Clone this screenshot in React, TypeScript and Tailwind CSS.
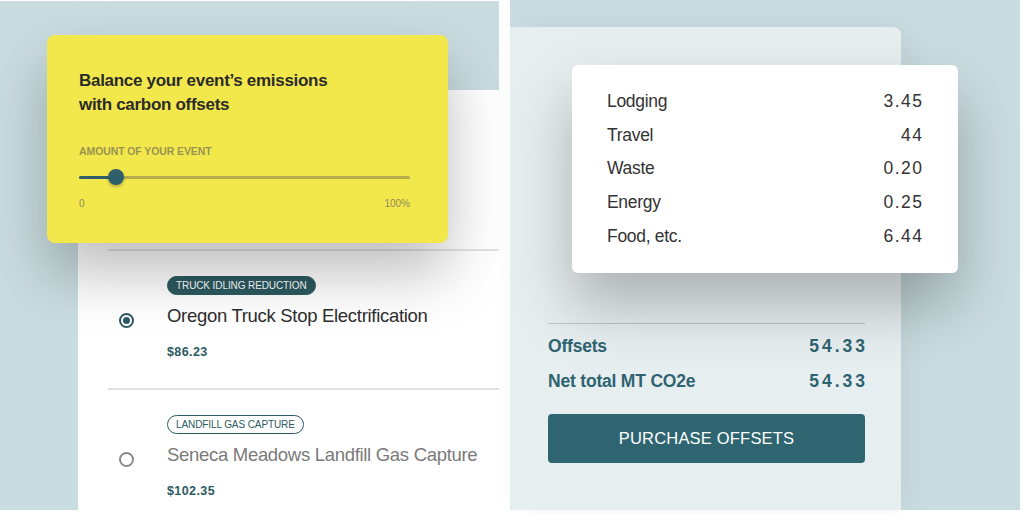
import React from "react";

const font = { fontFamily: '"Liberation Sans", Arial, sans-serif' };

function Radio({ checked }: { checked: boolean }) {
  return (
    <div
      className={`w-[15px] h-[15px] rounded-full border-2 flex items-center justify-center shrink-0 ${
        checked ? "border-[#2d5a63]" : "border-[#8a8a8a]"
      }`}
    >
      {checked && <div className="w-[7px] h-[7px] rounded-full bg-[#2d5a63]" />}
    </div>
  );
}

function Item({
  badge,
  title,
  price,
  selected,
}: {
  badge: string;
  title: string;
  price: string;
  selected: boolean;
}) {
  return (
    <div className="shrink-0 border-t-2 border-[#e2e2e2] h-[139px] flex pl-[11px] pt-[25px]">
      <div className="mt-[37px]">
        <Radio checked={selected} />
      </div>
      <div className="ml-[33px] flex flex-col items-start">
        <div
          className={`h-[19px] px-[8px] rounded-full flex items-center text-[10px] tracking-[-0.1px] ${
            selected
              ? "bg-[#2b5a60] text-white border border-[#2b5a60]"
              : "bg-white text-[#2b5a60] border border-[#2b5a60]"
          }`}
        >
          {badge}
        </div>
        <div
          className={`mt-[9px] text-[18.5px] leading-[24px] tracking-[-0.3px] ${
            selected ? "text-[#2e2e2e]" : "text-[#7a7a7a]"
          }`}
        >
          {title}
        </div>
        <div className="mt-[17px] text-[12.5px] leading-[14px] font-bold tracking-[0.4px] text-[#2b5a63]">
          {price}
        </div>
      </div>
    </div>
  );
}

export default function App() {
  const rows: [string, string][] = [
    ["Lodging", "3.45"],
    ["Travel", "44"],
    ["Waste", "0.20"],
    ["Energy", "0.25"],
    ["Food, etc.", "6.44"],
  ];
  return (
    <div className="w-[1024px] h-[513px] bg-white flex gap-[11px] overflow-hidden" style={font}>
      {/* Left panel */}
      <div className="relative mt-[1px] w-[499px] h-[509px] bg-[#c9dcdf] flex flex-col">
        <div className="ml-[78px] mt-[89px] flex-1 bg-white flex flex-col pl-[30px] pt-[159px] overflow-hidden">
          <Item
            badge="TRUCK IDLING REDUCTION"
            title="Oregon Truck Stop Electrification"
            price="$86.23"
            selected
          />
          <Item
            badge="LANDFILL GAS CAPTURE"
            title="Seneca Meadows Landfill Gas Capture"
            price="$102.35"
            selected={false}
          />
        </div>
        {/* Yellow card overlay */}
        <div className="absolute left-[47px] top-[34px] w-[401px] h-[208px] bg-[#f2e84c] rounded-[8px] shadow-[0_30px_60px_rgba(0,0,0,0.26)] pl-[32px] pr-[38px] pt-[34px]">
          <div className="text-[17px] leading-[24px] font-bold text-[#2b2b2b] tracking-[-0.3px]">
            Balance your event’s emissions
            <br />
            with carbon offsets
          </div>
          <div className="mt-[28px] text-[10.5px] leading-[12px] font-bold text-[#9a9450] tracking-[-0.1px]">
            AMOUNT OF YOUR EVENT
          </div>
          <div className="relative mt-[11px] h-[18px] flex items-center">
            <div className="w-full h-[3px] bg-[#b3ad4c] rounded-full" />
            <div className="absolute left-0 w-[37px] h-[3px] bg-[#2e5f6b] rounded-full" />
            <div className="absolute left-[29px] w-[16px] h-[16px] rounded-full bg-[#2e5f6b] shadow-[0_2px_3px_rgba(0,0,0,0.25)]" />
          </div>
          <div className="mt-[10px] flex justify-between text-[10px] text-[#8f8a55]">
            <span>0</span>
            <span>100%</span>
          </div>
        </div>
      </div>

      {/* Right panel */}
      <div className="relative w-[510px] h-[510px] bg-[#c9dcdf] flex flex-col">
        <div className="mt-[27px] w-[391px] flex-1 bg-[#e7eef0] rounded-tr-[8px] flex flex-col px-[38px] pr-[36px] pt-[296px] shadow-[8px_0_30px_rgba(0,0,0,0.05)]">
          <div className="h-[1px] bg-[#b9c3c6]" />
          <div className="mt-[11px] flex justify-between items-center h-[22px] text-[17.5px] font-bold text-[#2e6370]">
            <span className="tracking-[-0.2px]">Offsets</span>
            <span className="tracking-[3px] -mr-[3px]">54.33</span>
          </div>
          <div className="mt-[13px] flex justify-between items-center h-[22px] text-[17.5px] font-bold text-[#2e6370]">
            <span className="tracking-[-0.2px]">Net total MT CO2e</span>
            <span className="tracking-[3px] -mr-[3px]">54.33</span>
          </div>
          <button className="mt-[22px] h-[49px] w-full bg-[#2e6570] rounded-[4px] text-white text-[16.5px] tracking-[0.2px]">
            PURCHASE OFFSETS
          </button>
        </div>
        {/* Popup overlay */}
        <div className="absolute left-[62px] top-[65px] w-[386px] h-[208px] bg-white rounded-[6px] shadow-[0_32px_60px_rgba(0,0,0,0.26)] pl-[35px] pr-[36px] pt-[19px]">
          {rows.map(([k, v]) => (
            <div key={k} className="h-[33.75px] flex justify-between items-center text-[17.5px] text-[#333]">
              <span className="tracking-[-0.3px]">{k}</span>
              <span className="tracking-[1.5px] -mr-[1.5px]">{v}</span>
            </div>
          ))}
        </div>
      </div>
    </div>
  );
}
